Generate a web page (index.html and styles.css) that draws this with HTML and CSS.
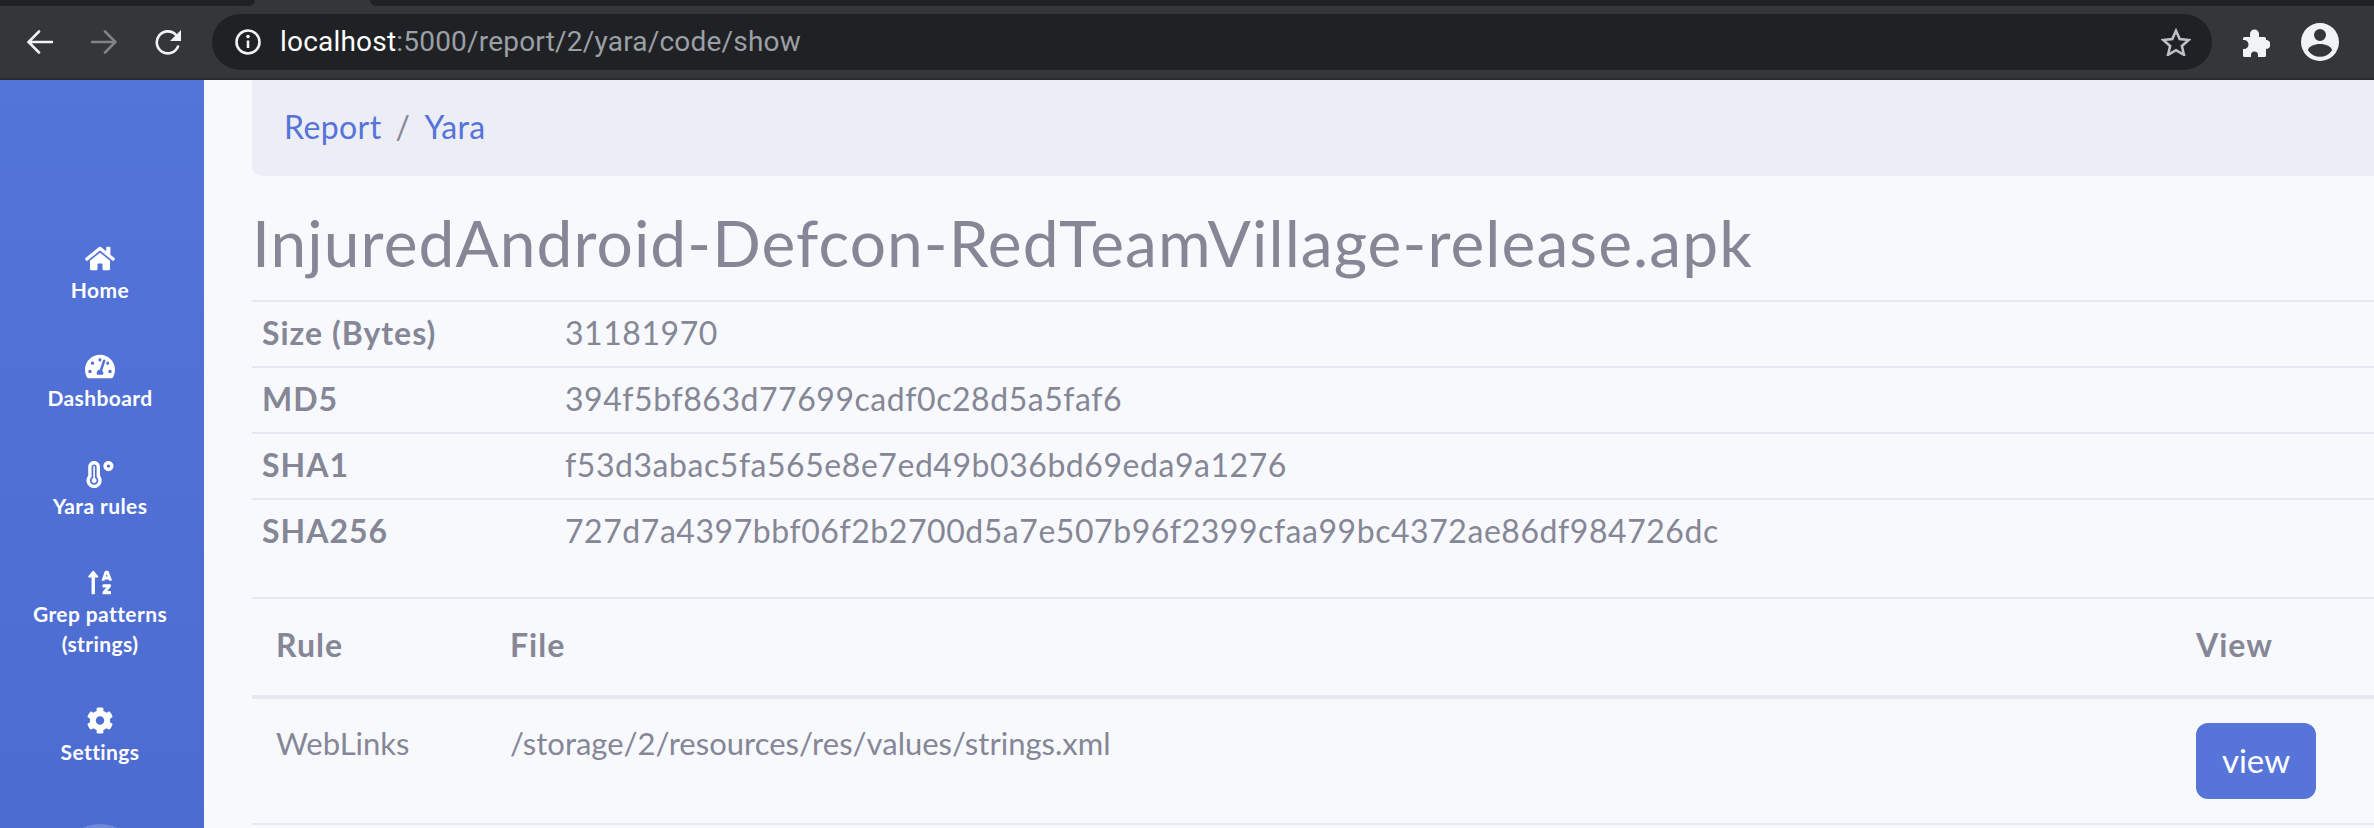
FILE: index.html
```html
<!DOCTYPE html>
<html lang="en">
<head>
<meta charset="utf-8">
<title>Report</title>
<link rel="stylesheet" href="styles.css">
</head>
<body>
<div class="chrome">
  <div class="tabstrip"><div class="tab-l"></div><div class="tab-gap"></div><div class="tab-r"></div></div>
  <div class="toolbar">
    <svg class="tool back" viewBox="0 0 26 24"><path d="M25 12H2M12 1.5 1.5 12 12 22.5"/></svg>
    <svg class="tool fwd" viewBox="0 0 26 24"><path d="M1 12h23M14 1.5 24.500 12 14 22.500"/></svg>
    <svg class="tool reload" viewBox="0 0 27 26"><path d="M23 17.500A11 11 0 1 1 21 6l2.500 3"/><path class="solid" d="M26 1v11H15z"/></svg>
    <div class="omnibox">
      <svg class="info" viewBox="0 0 26 26"><circle cx="13" cy="13" r="11.500"/><path d="M13 11.500v7.500"/><circle class="solid" cx="13" cy="7.500" r="1.800"/></svg>
      <span class="url"><b class="host">localhost</b>:5000/report/2/yara/code/show</span>
      <svg class="star" viewBox="0 0 30 28"><path d="m15 2.800 3.700 8.300 9 .9-6.800 6 2 8.800-7.900-4.600-7.900 4.600 2-8.800-6.800-6 9-.9z"/></svg>
    </div>
    <svg class="puzzle" viewBox="0 0 29 29"><path d="M2 10.500a1.500 1.500 0 0 1 1.500-1.500H9V6a4.500 4.500 0 0 1 9 0v3h5.500A1.500 1.500 0 0 1 25 10.500V12a4.500 4.500 0 0 1 0 9v6.500a1.500 1.500 0 0 1-1.500 1.500H17v-2a3.500 3.500 0 0 0-7 0v2H3.500A1.500 1.500 0 0 1 2 27.500V21h1a4.500 4.500 0 0 0 0-9H2z"/></svg>
    <svg class="avatar" viewBox="0 0 38 38"><path fill-rule="evenodd" d="M19 0a19 19 0 1 1 0 38 19 19 0 0 1 0-38zm0 6a6 6 0 1 0 0 12 6 6 0 0 0 0-12zm0 15c-5.500 0-12 2.600-12 6.500a14.500 14.500 0 0 0 24 0c0-3.900-6.500-6.500-12-6.500z"/></svg>
  </div>
</div>
<div class="app">
  <nav class="sidebar">
    <a class="nav-item"><svg class="fa" viewBox="0 0 576 512"><path d="M280.37 148.26L96 300.11V464a16 16 0 0 0 16 16l112.06-.29a16 16 0 0 0 15.92-16V368a16 16 0 0 1 16-16h64a16 16 0 0 1 16 16v95.64a16 16 0 0 0 16 16.05L464 480a16 16 0 0 0 16-16V300L295.67 148.26a12.19 12.19 0 0 0-15.3 0zM571.6 251.47L488 182.56V44.05a12 12 0 0 0-12-12h-56a12 12 0 0 0-12 12v72.61L318.47 43a48 48 0 0 0-61 0L4.34 251.47a12 12 0 0 0-1.6 16.9l25.5 31A12 12 0 0 0 45.15 301l235.22-193.74a12.19 12.19 0 0 1 15.3 0L530.9 301a12 12 0 0 0 16.9-1.6l25.5-31a12 12 0 0 0-1.7-16.93z"/></svg><span>Home</span></a>
    <a class="nav-item"><svg class="fa" viewBox="0 0 576 512"><path d="M288 32C128.94 32 0 160.94 0 320c0 52.8 14.25 102.26 39.06 144.8 5.61 9.62 16.3 15.2 27.44 15.2h443c11.14 0 21.83-5.58 27.44-15.2C561.75 422.26 576 372.8 576 320c0-159.06-128.94-288-288-288zm0 64c14.71 0 26.58 10.13 30.32 23.65-1.11 2.26-2.64 4.23-3.45 6.67l-9.22 27.67c-5.13 3.49-10.97 6.01-17.64 6.01-17.67 0-32-14.33-32-32S270.33 96 288 96zM96 384c-17.67 0-32-14.33-32-32s14.33-32 32-32 32 14.33 32 32-14.33 32-32 32zm48-160c-17.67 0-32-14.33-32-32s14.33-32 32-32 32 14.33 32 32-14.33 32-32 32zm246.77-72.41l-61.33 184C343.13 347.33 352 364.54 352 384c0 11.72-3.38 22.55-8.88 32H232.88c-5.5-9.45-8.88-20.28-8.88-32 0-33.94 26.5-61.43 59.9-63.59l61.34-184.01c4.17-12.56 17.73-19.45 30.36-15.17 12.57 4.19 19.35 17.77 15.17 30.36zm14.66 57.2l15.52-46.55c3.47-1.29 7.13-2.23 11.05-2.23 17.67 0 32 14.33 32 32s-14.33 32-32 32c-11.38-.01-20.89-6.28-26.57-15.22zM480 384c-17.67 0-32-14.33-32-32s14.33-32 32-32 32 14.33 32 32-14.33 32-32 32z"/></svg><span>Dashboard</span></a>
    <a class="nav-item"><svg class="fa" viewBox="0 0 512 512"><path d="M416 0c-52.9 0-96 43.1-96 96s43.1 96 96 96 96-43.1 96-96-43.1-96-96-96zm0 128c-17.7 0-32-14.3-32-32s14.3-32 32-32 32 14.3 32 32-14.3 32-32 32zm-160-16C256 50.1 205.9 0 144 0S32 50.1 32 112v166.5C12.3 303.2 0 334 0 368c0 79.5 64.5 144 144 144s144-64.5 144-144c0-33.2-12.2-64.8-32-89.5V112zM144 448c-44.1 0-80-35.9-80-80 0-25.5 12.2-49 32-63.8V112c0-26.5 21.5-48 48-48s48 21.5 48 48v192.2c19.8 14.8 32 38.3 32 63.8 0 44.1-35.9 80-80 80zm16-125.1V112c0-8.8-7.2-16-16-16s-16 7.2-16 16v210.9c-18.6 6.6-32 24.2-32 45.1 0 26.5 21.5 48 48 48s48-21.5 48-48c0-20.9-13.4-38.5-32-45.1z"/></svg><span>Yara rules</span></a>
    <a class="nav-item"><svg class="fa" viewBox="0 0 448 512"><path d="M16 160h48v304a16 16 0 0 0 16 16h32a16 16 0 0 0 16-16V160h48c14.21 0 21.38-17.24 11.31-27.31l-80-96a16 16 0 0 0-22.62 0l-80 96C-5.35 142.74 1.77 160 16 160zm400 128H288a16 16 0 0 0-16 16v32a16 16 0 0 0 16 16h56l-61.26 70.45A32 32 0 0 0 272 446.37V464a16 16 0 0 0 16 16h128a16 16 0 0 0 16-16v-32a16 16 0 0 0-16-16h-56l61.26-70.45A32 32 0 0 0 432 321.63V304a16 16 0 0 0-16-16zm31.06-85.38l-59.27-160A16 16 0 0 0 372.72 32h-41.44a16 16 0 0 0-15.07 10.62l-59.27 160A16 16 0 0 0 272 224h24.83a16 16 0 0 0 15.23-11.08l4.42-12.92h71l4.41 12.92A16 16 0 0 0 407.16 224H432a16 16 0 0 0 15.06-21.38zM335.61 144L352 96l16.39 48z"/></svg><span>Grep patterns (strings)</span></a>
    <a class="nav-item"><svg class="fa" viewBox="0 0 512 512"><path d="M487.4 315.7l-42.6-24.6c4.3-23.2 4.3-47 0-70.2l42.6-24.6c4.9-2.8 7.1-8.6 5.500-14-11.1-35.6-30-67.8-54.7-94.6-3.8-4.1-10-5.100-14.8-2.3L380.8 110c-17.9-15.4-38.5-27.3-60.8-35.1V25.800c0-5.600-3.900-10.500-9.400-11.700-36.700-8.200-74.300-7.800-109.200 0-5.500 1.200-9.400 6.100-9.400 11.700V75c-22.200 7.900-42.800 19.800-60.800 35.100L88.700 85.500c-4.900-2.800-11-1.900-14.800 2.300-24.700 26.700-43.600 58.900-54.700 94.600-1.700 5.400.6 11.200 5.500 14L67.300 221c-4.300 23.200-4.300 47 0 70.200l-42.600 24.600c-4.900 2.800-7.100 8.600-5.500 14 11.100 35.600 30 67.800 54.700 94.600 3.800 4.100 10 5.100 14.800 2.300l42.600-24.600c17.900 15.400 38.500 27.300 60.800 35.100v49.200c0 5.600 3.900 10.500 9.400 11.700 36.700 8.200 74.300 7.800 109.200 0 5.500-1.200 9.400-6.100 9.400-11.700v-49.200c22.200-7.900 42.800-19.800 60.800-35.100l42.600 24.600c4.900 2.800 11 1.900 14.800-2.300 24.700-26.700 43.600-58.900 54.700-94.600 1.500-5.500-.7-11.300-5.600-14.100zM256 336c-44.100 0-80-35.900-80-80s35.900-80 80-80 80 35.900 80 80-35.900 80-80 80z"/></svg><span>Settings</span></a>
    <div class="toggle"></div>
  </nav>
  <main class="content">
    <ol class="breadcrumb">
      <li><a>Report</a></li>
      <li class="sep">/</li>
      <li><a>Yara</a></li>
    </ol>
    <h1 class="title">InjuredAndroid-Defcon-RedTeamVillage-release.apk</h1>
    <table class="meta">
      <tr><th>Size (Bytes)</th><td>31181970</td></tr>
      <tr><th>MD5</th><td>394f5bf863d77699cadf0c28d5a5faf6</td></tr>
      <tr><th>SHA1</th><td>f53d3abac5fa565e8e7ed49b036bd69eda9a1276</td></tr>
      <tr><th>SHA256</th><td>727d7a4397bbf06f2b2700d5a7e507b96f2399cfaa99bc4372ae86df984726dc</td></tr>
    </table>
    <table class="rules">
      <thead><tr><th class="c-rule">Rule</th><th class="c-file">File</th><th class="c-view">View</th></tr></thead>
      <tbody><tr><td>WebLinks</td><td>/storage/2/resources/res/values/strings.xml</td><td><a class="btn">view</a></td></tr></tbody>
    </table>
  </main>
</div>
</body>
</html>
```
FILE: styles.css
```css
* { box-sizing: border-box; }
html, body { margin: 0; height: 100%; overflow: hidden; }
body {
  width: 2374px;
  height: 828px;
  background: #f8f9fd;
  font-family: Lato, "Noto Sans", sans-serif;
  color: #858796;
  display: flex;
  flex-direction: column;
}
.chrome { height: 80px; flex: none; background: #35363a; border-bottom: 2px solid #28292c; }
.tabstrip { display: flex; height: 6px; }
.tab-l { width: 255px; background: #202124; border-bottom-right-radius: 6px; }
.tab-gap { width: 115px; }
.tab-r { flex: 1; background: #202124; border-bottom-left-radius: 6px; }
.toolbar { display: flex; align-items: center; height: 72px; padding-left: 27px; position: relative; }
.tool { fill: none; stroke: #f1f3f4; stroke-width: 2.6; stroke-linecap: round; flex: none; }
.tool .solid { fill: #f1f3f4; stroke: none; }
.back { width: 26px; height: 24px; }
.fwd { width: 26px; height: 24px; margin-left: 38px; stroke: #808285; }
.reload { width: 27px; height: 26px; margin-left: 38px; }
.omnibox {
  display: flex;
  align-items: center;
  width: 2000px;
  height: 56px;
  margin-left: 30px;
  padding: 0 21px 0 23px;
  flex: none;
  background: #202124;
  border-radius: 28px;
}
.info { width: 26px; height: 26px; flex: none; fill: none; stroke: #f1f3f4; stroke-width: 2.6; }
.info .solid { fill: #f1f3f4; stroke: none; }
.url {
  margin-left: 19px;
  padding-bottom: 2px;
  flex: 1;
  font-family: Roboto, sans-serif;
  font-size: 28px;
  letter-spacing: .2px;
  color: #9aa0a6;
  white-space: nowrap;
}
.host { font-weight: 400; color: #fff; }
.star { width: 30px; height: 28px; flex: none; fill: none; stroke: #bdc1c6; stroke-width: 2.6; }
.puzzle { width: 29px; height: 29px; margin-left: 29px; flex: none; fill: #f1f3f4; }
.avatar { width: 38px; height: 38px; margin-left: 31px; flex: none; fill: #f1f3f4; }

.app { display: flex; flex: 1; min-height: 0; }
.sidebar {
  width: 204px;
  flex: none;
  padding: 165px 4px 0 0;
  background: linear-gradient(180deg, #5374d8 0%, #4d6cd2 100%);
  display: flex;
  flex-direction: column;
  align-items: center;
  overflow: hidden;
}
.nav-item {
  display: flex;
  flex-direction: column;
  align-items: center;
  width: 160px;
  margin-bottom: 48px;
  color: #fff;
  font-weight: 700;
  font-size: 21px;
  letter-spacing: .4px;
  line-height: 30px;
  text-align: center;
}
.fa { height: 27px; width: 30px; margin-bottom: 3px; fill: #fff; }
.toggle {
  width: 82px;
  height: 82px;
  flex: none;
  border-radius: 50%;
  background: rgba(255, 255, 255, .2);
  margin-top: 9px;
}
.content { flex: 1; min-width: 0; padding-left: 48px; }
.breadcrumb {
  display: flex;
  align-items: center;
  gap: 14px;
  list-style: none;
  height: 96px;
  margin: 0;
  padding: 0 32px 3px;
  background: #ecedf5;
  border-radius: 0 0 0 10px;
  font-size: 32px;
  letter-spacing: .4px;
}
.breadcrumb a { color: #5573d9; }
.sep { color: #858796; }
.title {
  margin: 0;
  height: 124px;
  padding-top: 34px;
  font-size: 64px;
  line-height: 66px;
  letter-spacing: 1.1px;
  font-weight: 400;
  white-space: nowrap;
}
.meta { width: 100%; border-collapse: collapse; font-size: 32px; letter-spacing: .55px; }
.meta tr { height: 66px; }
.meta th, .meta td { border-top: 2px solid #e6e7f0; padding: 0 10px 4px; text-align: left; vertical-align: middle; }
.meta th { width: 303px; font-weight: 700; letter-spacing: 1px; }
.rules { width: 100%; border-collapse: collapse; margin-top: 32px; font-size: 31px; border-top: 2px solid #e6e7f0; }
.rules th { height: 99px; padding: 0 24px 5px; text-align: left; font-size: 32px; letter-spacing: 1px; font-weight: 700; border-bottom: 4px solid #e6e7f0; }
.rules td { height: 127px; padding: 24px 24px 0; line-height: 40px; vertical-align: top; border-bottom: 2px solid #e6e7f0; }
.c-rule { width: 234px; }
.c-view { width: 202px; }
.btn {
  display: flex;
  align-items: center;
  justify-content: center;
  width: 120px;
  height: 76px;
  padding-bottom: 3px;
  background: #5775d9;
  border-radius: 12px;
  font-size: 33px;
  color: #fff;
}
```
